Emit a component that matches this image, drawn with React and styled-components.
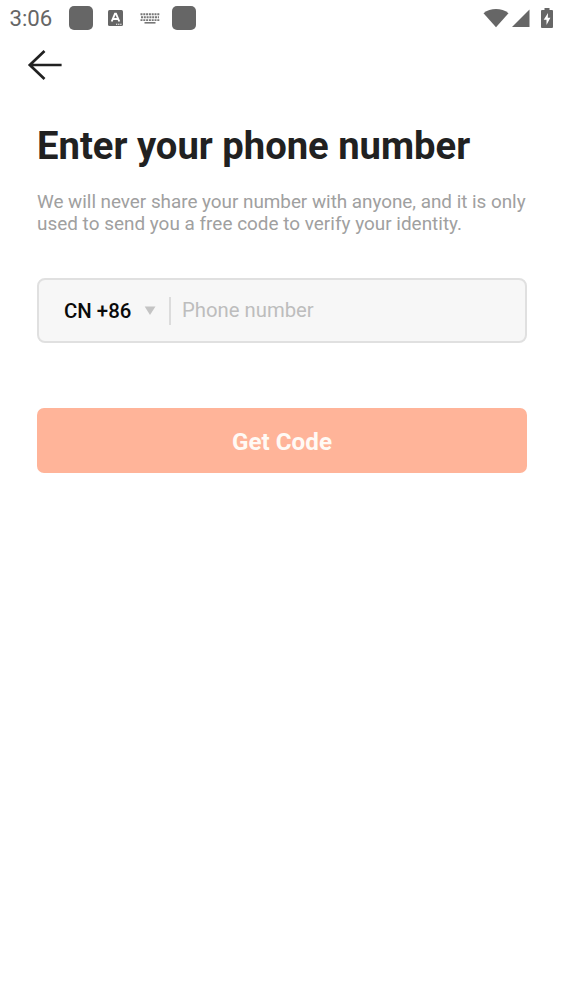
import React from "react";
import styled, { createGlobalStyle } from "styled-components";

const GlobalStyle = createGlobalStyle`
  * { box-sizing: border-box; }
  body { margin: 0; background: #fff; font-family: Roboto, "Liberation Sans", sans-serif; }
`;

const Screen = styled.div`
  min-height: 1003px;
  display: flex;
  flex-direction: column;
  background: #fff;
`;

const StatusBar = styled.header`
  height: 36px;
  display: flex;
  align-items: center;
  justify-content: space-between;
  padding: 0 11px 0 9.5px;
  color: #666;
`;

const StatusGroup = styled.div`
  display: flex;
  align-items: center;
`;

const Clock = styled.span`
  width: 59.2px;
  font-size: 22.2px;
  line-height: 26px;
`;

const AppBlock = styled.span`
  width: 24px;
  height: 24px;
  margin-left: ${(p) => p.$gap || 0}px;
  border-radius: 5px;
  background: #666;
`;

const Glyph = styled.svg`
  display: block;
  flex: none;
  margin-left: ${(p) => p.$gap || 0}px;
`;

const NavBar = styled.nav`
  height: 58px;
  padding: 13px 0 0 27px;
`;

const BackButton = styled.button`
  display: block;
  padding: 0;
  border: 0;
  background: none;
`;

const Content = styled.main`
  display: flex;
  flex-direction: column;
  padding: 29px 37px 0;
`;

const Title = styled.h1`
  margin: 0;
  font-size: 38.2px;
  line-height: 46px;
  font-weight: 700;
  color: #212121;
  white-space: nowrap;
`;

const Description = styled.p`
  margin: 22px 0 0;
  font-size: 18.9px;
  line-height: 22px;
  font-weight: 400;
  color: #a0a0a0;
  white-space: nowrap;
`;

const Line = styled.span`
  display: block;
  letter-spacing: ${(p) => p.$track}px;
`;

const PhoneField = styled.div`
  height: 65px;
  margin-top: 43px;
  display: flex;
  align-items: center;
  padding-left: 25px;
  border: 2px solid #e0e0e0;
  border-radius: 8px;
  background: #f7f7f7;
`;

const CountryCode = styled.span`
  width: 80px;
  padding-top: 1px;
  font-size: 20.4px;
  line-height: 26px;
  font-weight: 500;
  color: #0a0a0a;
`;

const Divider = styled.span`
  width: 2px;
  height: 28px;
  margin: 0 11px 0 13px;
  background: #dcdcdc;
`;

const Placeholder = styled.span`
  padding-bottom: 1px;
  font-size: 20.3px;
  line-height: 26px;
  color: #bdbdbd;
`;

const SubmitButton = styled.button`
  height: 65px;
  margin-top: 65px;
  padding: 2px 0 0;
  border: 0;
  border-radius: 7px;
  background: #ffb499;
  color: #fffaf5;
  font: 700 24.2px/28px Roboto, "Liberation Sans", sans-serif;
`;

export default function App() {
  return (
    <>
      <GlobalStyle />
      <Screen>
        <StatusBar>
          <StatusGroup>
            <Clock>3:06</Clock>
            <AppBlock />
            <Glyph $gap={15} width="15" height="16" viewBox="0 0 15 16">
              <rect width="15" height="16" rx="1.5" fill="#666" />
              <path d="M3.7 11.5 7 3.7h1l3.3 7.8M5 9h5" fill="none" stroke="#fff" strokeWidth="1.9" />
              <path d="M8 14.3h1.3m.8 0h1.3m.8 0h1.3" stroke="#fff" strokeWidth="1.1" />
            </Glyph>
            <Glyph $gap={17} width="20" height="11" viewBox="0 0 20 11">
              <path d="M.5 1.3h19M1 4.2h18M.5 7.1h19" stroke="#777" strokeWidth="1.9" strokeDasharray="2 .8" />
              <path d="M4.5 9.8h11" stroke="#777" strokeWidth="1.6" />
            </Glyph>
            <AppBlock $gap={12.3} />
          </StatusGroup>
          <StatusGroup>
            <Glyph width="26" height="20" viewBox="0 0 26 20">
              <path d="M.5 5.2C7.5-.4 18.5-.4 25.5 5.2L13 19.3Z" fill="#666" />
            </Glyph>
            <Glyph $gap={3} width="18" height="18" viewBox="0 0 18 18">
              <path d="M17.5.5V18H0Z" fill="#666" />
            </Glyph>
            <Glyph $gap={11} width="12" height="20" viewBox="0 0 12 20">
              <path d="M3.5 0h5v2H11q1 0 1 1v16q0 1-1 1H1q-1 0-1-1V3q0-1 1-1h2.5Z" fill="#666" />
              <path d="M7 5 2.7 11.8H5.5V17L9.4 9.8H6.8Z" fill="#fff" />
            </Glyph>
          </StatusGroup>
        </StatusBar>
        <NavBar>
          <BackButton aria-label="Back">
            <Glyph width="36" height="32" viewBox="0 0 36 32">
              <path d="M17.5 2 2.8 16 17.5 30M2.8 16H34.6" fill="none" stroke="#212121" strokeWidth="2.7" />
            </Glyph>
          </BackButton>
        </NavBar>
        <Content>
          <Title>Enter your phone number</Title>
          <Description>
            <Line $track={-0.03}>We will never share your number with anyone, and it is only</Line>
            <Line $track={0.02}>used to send you a free code to verify your identity.</Line>
          </Description>
          <PhoneField>
            <CountryCode>CN +86</CountryCode>
            <Glyph width="12" height="9" viewBox="0 0 12 9">
              <path d="M.7.5h10.8L6 9Z" fill="#c4c4c4" />
            </Glyph>
            <Divider />
            <Placeholder>Phone number</Placeholder>
          </PhoneField>
          <SubmitButton>Get Code</SubmitButton>
        </Content>
      </Screen>
    </>
  );
}
